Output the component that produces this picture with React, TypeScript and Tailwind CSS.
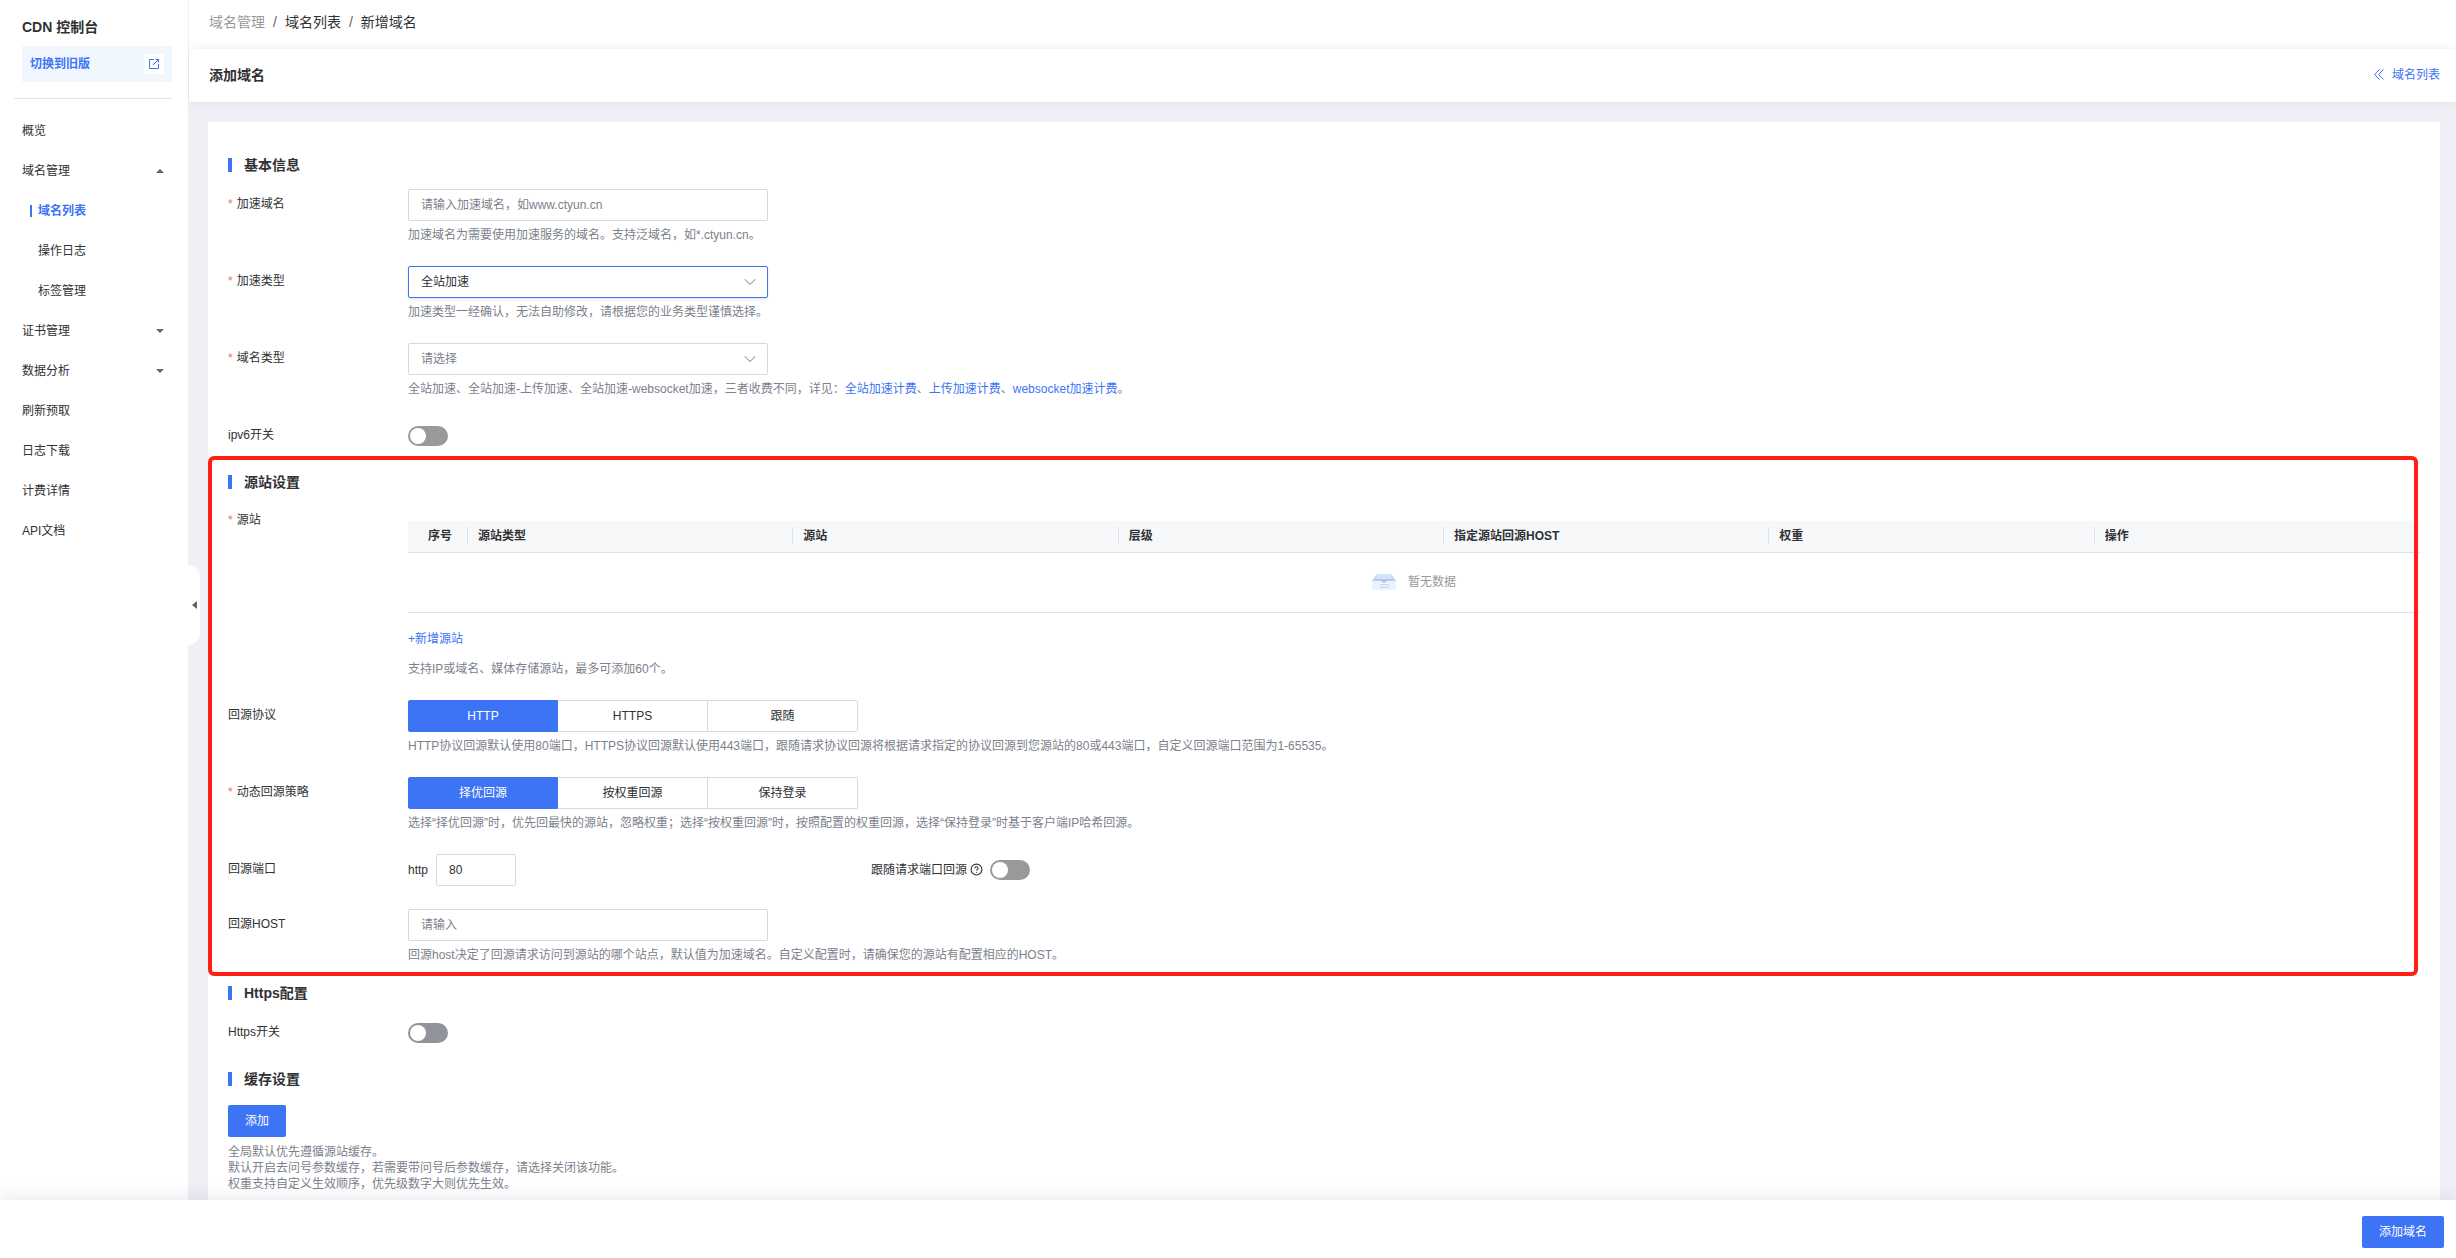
import { useState } from "react";
import type { ReactNode } from "react";
import { ChevronDown, CircleHelp } from "lucide-react";
import clsx from "clsx";

type MenuItem = {
  label: string;
  state?: "open" | "closed";
  children?: string[];
};

const MENU: MenuItem[] = [
  { label: "概览" },
  { label: "域名管理", state: "open", children: ["域名列表", "操作日志", "标签管理"] },
  { label: "证书管理", state: "closed" },
  { label: "数据分析", state: "closed" },
  { label: "刷新预取" },
  { label: "日志下载" },
  { label: "计费详情" },
  { label: "API文档" },
];

const COLUMNS = ["源站类型", "源站", "层级", "指定源站回源HOST", "权重", "操作"];

const CACHE_TIPS = [
  "全局默认优先遵循源站缓存。",
  "默认开启去问号参数缓存，若需要带问号后参数缓存，请选择关闭该功能。",
  "权重支持自定义生效顺序，优先级数字大则优先生效。",
];

function Sidebar() {
  return (
    <aside className="relative z-10 w-[188px] shrink-0 bg-white">
      <h1 className="px-[22px] pt-4 text-sm leading-[22px] font-bold">CDN 控制台</h1>
      <a
        href="#old"
        className="mt-2 mr-4 ml-[22px] flex h-9 items-center justify-between bg-[#f0f7ff] px-2 font-bold text-[#3d73f5]"
      >
        切换到旧版
        <span className="flex size-5 items-center justify-center rounded-xs bg-white">
          <svg width="12" height="12" viewBox="0 0 12 12" fill="none" stroke="currentColor">
            <path d="M6 1.5H1.5v9h9V6M7.5 1.5h3v3M10.5 1.5 5 7" />
          </svg>
        </span>
      </a>
      <div className="mt-4 mr-4 ml-[14px] h-px bg-[#dfe1e8]" />
      <nav className="mt-3">
        <ul>
          {MENU.map((item) => (
            <li key={item.label}>
              <a href="#menu" className="flex h-10 items-center justify-between pr-6 pl-[22px]">
                {item.label}
                {item.state && (
                  <svg width="8" height="4" viewBox="0 0 8 4" fill="#606266">
                    <path d={item.state === "open" ? "M0 4 4 0l4 4z" : "M0 0l4 4 4-4z"} />
                  </svg>
                )}
              </a>
              {item.children?.map((child, i) => (
                <a
                  key={child}
                  href="#menu"
                  className={clsx(
                    "flex h-10 items-center pl-[30px]",
                    i === 0 && "font-bold text-[#3d73f5]",
                  )}
                >
                  <span className={clsx("mr-1.5 h-3 w-0.5", i === 0 && "bg-[#3d73f5]")} />
                  {child}
                </a>
              ))}
            </li>
          ))}
        </ul>
      </nav>
      <button
        type="button"
        aria-label="收起菜单"
        className="absolute top-[565px] left-full flex h-20 w-3 items-center justify-center rounded-r-xl bg-white"
      >
        <svg width="6" height="8" viewBox="0 0 6 8" fill="#606266">
          <path d="M6 0v8L1 4z" />
        </svg>
      </button>
    </aside>
  );
}

function SectionTitle({ children }: { children: ReactNode }) {
  return (
    <h3 className="flex h-[22px] items-center gap-3 text-sm font-bold">
      <span className="h-3.5 w-1 bg-[#3d73f5]" />
      {children}
    </h3>
  );
}

type FieldProps = {
  label: string;
  htmlFor?: string;
  required?: boolean;
  help?: ReactNode;
  children: ReactNode;
};

function Field({ label, htmlFor, required, help, children }: FieldProps) {
  return (
    <div className="flex">
      <label htmlFor={htmlFor} className="flex h-[30px] w-[180px] shrink-0 items-center">
        {required && <span className="mr-1 text-[#f56c6c]">*</span>}
        {label}
      </label>
      <div className="min-w-0 flex-1">
        {children}
        {help && <p className="mt-1.5 leading-4 text-[#7c818c]">{help}</p>}
      </div>
    </div>
  );
}

function TextInput({ id, placeholder }: { id: string; placeholder: string }) {
  return (
    <input
      id={id}
      type="text"
      placeholder={placeholder}
      className="block h-8 w-[360px] rounded-xs border border-[#d7d9dd] px-3 outline-none placeholder:text-[#7c818c]"
    />
  );
}

function SelectBox({ id, options, active }: { id: string; options: string[]; active?: boolean }) {
  return (
    <div className="relative w-[360px]">
      <select
        id={id}
        className={clsx(
          "block h-8 w-full appearance-none rounded-xs border bg-white px-3 outline-none",
          active ? "border-[#3d73f5] shadow-sm" : "border-[#d7d9dd] text-[#7c818c]",
        )}
      >
        {options.map((option) => (
          <option key={option}>{option}</option>
        ))}
      </select>
      <ChevronDown
        size={20}
        strokeWidth={1.25}
        className="pointer-events-none absolute top-1.5 right-2 text-[#909399]"
      />
    </div>
  );
}

function Switch({ id, dark }: { id: string; dark?: boolean }) {
  return (
    <input
      id={id}
      type="checkbox"
      role="switch"
      className={clsx(
        "block h-5 w-10 appearance-none rounded-full p-0.5 before:block before:size-4 before:rounded-full before:bg-white checked:bg-[#3d73f5] checked:before:ml-5",
        dark ? "bg-[#909399]" : "bg-[#999999]",
      )}
    />
  );
}

function ButtonGroup({ label, options }: { label: string; options: string[] }) {
  const [selected, setSelected] = useState(options[0]);

  return (
    <div role="group" aria-label={label} className="flex">
      {options.map((option) => (
        <button
          key={option}
          type="button"
          aria-pressed={option === selected}
          onClick={() => setSelected(option)}
          className={clsx(
            "h-8 w-[150px] border-y border-r first:rounded-l-xs first:border-l last:rounded-r-xs",
            option === selected
              ? "border-[#3d73f5] bg-[#3d73f5] text-white"
              : "border-[#d7d9dd] bg-white",
          )}
        >
          {option}
        </button>
      ))}
    </div>
  );
}

function EmptyIcon() {
  return (
    <svg width="24" height="16" viewBox="0 0 24 16">
      <path d="M5 0h14l5 7H0z" fill="#d0e2fd" />
      <path d="M4 1.5 0 7h5V5.5zM20 1.5 24 7h-5V5.5z" fill="#c3d3ee" />
      <path d="M4.5 5h15L24 7H0z" fill="#b9c9e6" />
      <path d="M0 7h24v9H0z" fill="#e9f2ff" />
      <path d="M9.5 6.5h5L13 8.5h-2z" fill="#a9bade" />
      <path d="M8 10h9v1H8zM8 12.5h9V14H8z" fill="#cddaee" />
    </svg>
  );
}

function OriginTable() {
  return (
    <table className="mt-4 w-full table-fixed border-collapse text-left">
      <thead>
        <tr className="h-[31px] border-b border-[#dfe1e8] bg-[#f7f8fa]">
          <th className="w-[60px] p-0">
            <div className="border-r border-[#dfe1e8] pl-5 leading-[18px]">序号</div>
          </th>
          {COLUMNS.map((column) => (
            <th key={column} className="group p-0">
              <div className="border-r border-[#dfe1e8] pl-2.5 leading-[18px] group-last:border-r-0">
                {column}
              </div>
            </th>
          ))}
        </tr>
      </thead>
      <tbody>
        <tr className="h-[60px] border-b border-[#dfe1e8]">
          <td colSpan={7} className="p-0">
            <div className="flex items-center justify-center gap-3 text-[#999999]">
              <EmptyIcon />
              暂无数据
            </div>
          </td>
        </tr>
      </tbody>
    </table>
  );
}

function BillingLink({ children }: { children: ReactNode }) {
  return (
    <a href="#billing" className="text-[#3d73f5]">
      {children}
    </a>
  );
}

function BasicInfo() {
  return (
    <section className="px-5 pb-1.5">
      <SectionTitle>基本信息</SectionTitle>
      <div className="mt-[13px] flex flex-col gap-[23px]">
        <Field
          label="加速域名"
          htmlFor="domain"
          required
          help="加速域名为需要使用加速服务的域名。支持泛域名，如*.ctyun.cn。"
        >
          <TextInput id="domain" placeholder="请输入加速域名，如www.ctyun.cn" />
        </Field>
        <Field
          label="加速类型"
          htmlFor="speed-type"
          required
          help="加速类型一经确认，无法自助修改，请根据您的业务类型谨慎选择。"
        >
          <SelectBox id="speed-type" options={["全站加速"]} active />
        </Field>
        <Field
          label="域名类型"
          htmlFor="domain-type"
          required
          help={
            <>
              全站加速、全站加速-上传加速、全站加速-websocket加速，三者收费不同，详见：
              <BillingLink>全站加速计费</BillingLink>、<BillingLink>上传加速计费</BillingLink>、
              <BillingLink>websocket加速计费</BillingLink>。
            </>
          }
        >
          <SelectBox id="domain-type" options={["请选择"]} />
        </Field>
        <Field label="ipv6开关" htmlFor="ipv6">
          <div className="pt-1.5">
            <Switch id="ipv6" />
          </div>
        </Field>
      </div>
    </section>
  );
}

function OriginSettings() {
  return (
    <section className="relative px-5 pt-[15px] pb-[13px]">
      <div className="pointer-events-none absolute inset-y-0 right-[22px] left-0 rounded-md border-4 border-[#ff2015]" />
      <SectionTitle>源站设置</SectionTitle>
      <div className="mt-3 flex flex-col gap-[23px]">
        <Field label="源站" required>
          <OriginTable />
          <button type="button" className="mt-4 block leading-5 text-[#3d73f5]">
            +新增源站
          </button>
          <p className="mt-3 leading-4 text-[#7c818c]">支持IP或域名、媒体存储源站，最多可添加60个。</p>
        </Field>
        <Field
          label="回源协议"
          help="HTTP协议回源默认使用80端口，HTTPS协议回源默认使用443端口，跟随请求协议回源将根据请求指定的协议回源到您源站的80或443端口，自定义回源端口范围为1-65535。"
        >
          <ButtonGroup label="回源协议" options={["HTTP", "HTTPS", "跟随"]} />
        </Field>
        <Field
          label="动态回源策略"
          required
          help="选择“择优回源”时，优先回最快的源站，忽略权重；选择“按权重回源”时，按照配置的权重回源，选择“保持登录”时基于客户端IP哈希回源。"
        >
          <ButtonGroup label="动态回源策略" options={["择优回源", "按权重回源", "保持登录"]} />
        </Field>
        <Field label="回源端口" htmlFor="port">
          <div className="flex items-center">
            <div className="flex w-[463px] items-center gap-2">
              http
              <input
                id="port"
                type="text"
                defaultValue="80"
                className="h-8 w-20 rounded-xs border border-[#d7d9dd] px-3 outline-none"
              />
            </div>
            <label htmlFor="follow-port" className="mr-[7px] flex items-center gap-[3px]">
              跟随请求端口回源
              <CircleHelp size={13} strokeWidth={2} />
            </label>
            <Switch id="follow-port" />
          </div>
        </Field>
        <Field
          label="回源HOST"
          htmlFor="host"
          help="回源host决定了回源请求访问到源站的哪个站点，默认值为加速域名。自定义配置时，请确保您的源站有配置相应的HOST。"
        >
          <TextInput id="host" placeholder="请输入" />
        </Field>
      </div>
    </section>
  );
}

export default function App() {
  return (
    <div className="flex h-screen flex-col bg-white font-['Liberation_Sans','Noto_Sans_CJK_SC',sans-serif] text-xs text-[#303133]">
      <div className="flex min-h-0 flex-1">
        <Sidebar />
        <div className="flex min-w-0 flex-1 flex-col border-l border-[#eeeff3] bg-[#eff0f5]">
          <nav className="flex h-[49px] items-center gap-2 bg-white px-5 pb-1.5 text-sm">
            <a href="#domains" className="text-[#999999]">
              域名管理
            </a>
            <span className="text-[#606266]">/</span>
            <a href="#list">域名列表</a>
            <span className="text-[#606266]">/</span>
            <span>新增域名</span>
          </nav>
          <header className="flex h-[53px] items-center justify-between bg-white pr-4 pb-0.5 pl-5 shadow-[0_0_8px_rgba(0,0,0,0.08)]">
            <h2 className="text-sm font-bold">添加域名</h2>
            <a href="#list" className="flex items-center gap-2 text-[#3d73f5]">
              <svg width="10" height="11" viewBox="0 0 10 11" fill="none" stroke="currentColor">
                <path d="M5.5.5l-5 5 5 5M9.5.5l-5 5 5 5" />
              </svg>
              域名列表
            </a>
          </header>
          <main className="mt-5 mr-4 ml-[19px] min-h-0 flex-1 overflow-hidden bg-white pt-8">
            <BasicInfo />
            <OriginSettings />
            <section className="px-5 pt-1.5">
              <SectionTitle>Https配置</SectionTitle>
              <div className="mt-[13px]">
                <Field label="Https开关" htmlFor="https">
                  <div className="pt-1.5">
                    <Switch id="https" dark />
                  </div>
                </Field>
              </div>
            </section>
            <section className="px-5 pt-[21px]">
              <SectionTitle>缓存设置</SectionTitle>
              <button
                type="button"
                className="mt-[15px] mb-[7px] block h-8 rounded-xs bg-[#3d73f5] px-[17px] text-white"
              >
                添加
              </button>
              {CACHE_TIPS.map((tip) => (
                <p key={tip} className="leading-4 text-[#7c818c]">
                  {tip}
                </p>
              ))}
            </section>
          </main>
        </div>
      </div>
      <footer className="relative z-20 flex h-[58px] shrink-0 items-center justify-end bg-white px-3 pt-1.5 shadow-[0_0_20px_rgba(60,60,100,0.14)]">
        <button type="button" className="h-8 rounded-xs bg-[#3d73f5] px-[17px] text-white">
          添加域名
        </button>
      </footer>
    </div>
  );
}
